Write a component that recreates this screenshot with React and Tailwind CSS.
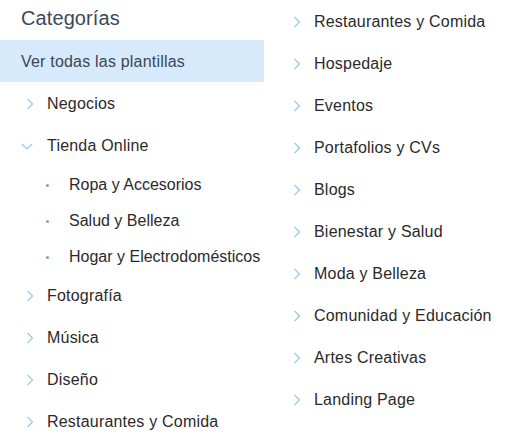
import React from "react";

const ChevronRight = () => (
  <svg width="8" height="12" viewBox="0 0 8 12" className="shrink-0">
    <path d="M1.5 0.8 L6.5 6 L1.5 11.2" fill="none" stroke="#8ec6f4" strokeWidth="1.2" />
  </svg>
);

const ChevronDown = () => (
  <svg width="12" height="7" viewBox="0 0 12 7" className="shrink-0">
    <path d="M0.8 1 L6 6 L11.2 1" fill="none" stroke="#8ec6f4" strokeWidth="1.1" />
  </svg>
);

const Item = ({ label, right }) => (
  <div className={`flex h-[42px] items-center pt-[2px] whitespace-nowrap ${right ? "pl-[29px]" : "pl-[26px]"}`}>
    <ChevronRight />
    <span className="ml-[13px]">{label}</span>
  </div>
);

const Sub = ({ label }) => (
  <div className="flex h-[36px] items-center pt-[2px] pl-[46px] whitespace-nowrap tracking-normal">
    <span className="h-[3px] w-[3px] shrink-0 rounded-full bg-[#5aaae8]" />
    <span className="ml-[20px] shrink-0">{label}</span>
  </div>
);

export default function App() {
  const right = [
    "Restaurantes y Comida",
    "Hospedaje",
    "Eventos",
    "Portafolios y CVs",
    "Blogs",
    "Bienestar y Salud",
    "Moda y Belleza",
    "Comunidad y Educación",
    "Artes Creativas",
    "Landing Page",
  ];
  return (
    <div
      className="flex h-[439px] w-[531px] overflow-hidden bg-white text-[16px] tracking-[0.2px] text-[#2a2a2a]"
      style={{ fontFamily: '"Liberation Sans", Arial, sans-serif' }}
    >
      <div className="w-[264px] shrink-0">
        <div className="flex h-[40px] items-center pb-[4px] pl-[21px] text-[20px] tracking-[0.1px] text-[#3d4858]">
          Categorías
        </div>
        <div className="flex h-[42px] items-center pt-[2px] bg-[#d6eafc] pl-[21px] text-[#3b4555]">
          Ver todas las plantillas
        </div>
        <Item label="Negocios" />
        <div className="flex h-[42px] items-center pt-[2px] pl-[21px]">
          <ChevronDown />
          <span className="ml-[14px]">Tienda Online</span>
        </div>
        <Sub label="Ropa y Accesorios" />
        <Sub label="Salud y Belleza" />
        <Sub label="Hogar y Electrodomésticos" />
        <Item label="Fotografía" />
        <Item label="Música" />
        <Item label="Diseño" />
        <Item label="Restaurantes y Comida" />
      </div>
      <div className="flex-1">
        {right.map((r) => (
          <Item key={r} label={r} right />
        ))}
      </div>
    </div>
  );
}
